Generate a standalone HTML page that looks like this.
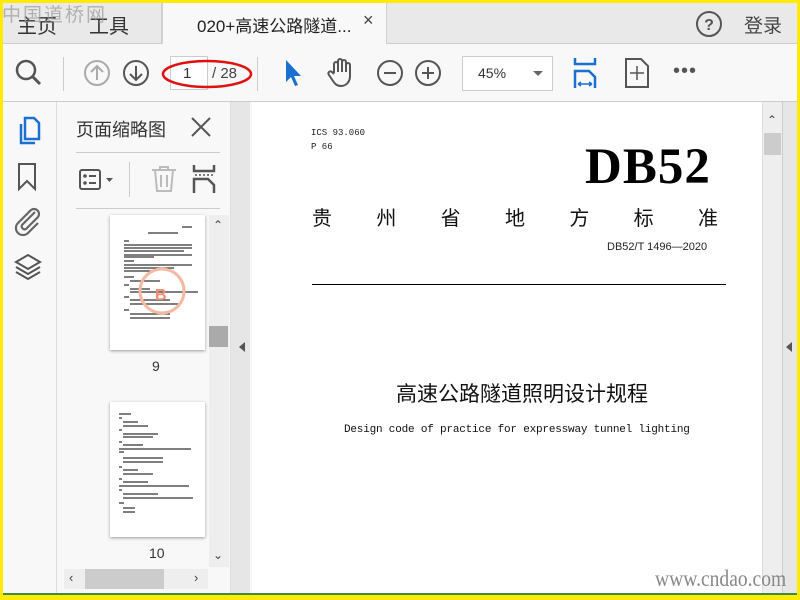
<!DOCTYPE html><html><head><meta charset="utf-8"><style>
*{margin:0;padding:0;box-sizing:border-box}
body{width:800px;height:600px;overflow:hidden;background:#ffeb00;position:relative;font-family:"Liberation Sans","Noto Sans CJK SC",sans-serif}
.a{position:absolute}
</style></head><body>
<div class="a" style="left:3px;top:3px;width:794px;height:591px;background:#f8f8f8"></div>
<div class="a" style="left:3px;top:3px;width:794px;height:41px;background:#e9e9e9;border-bottom:1px solid #ccc"></div>
<div class="a" style="left:161px;top:3px;width:2px;height:41px;background:#d0d0d0"></div>
<div class="a" style="left:163px;top:3px;width:223px;height:42px;background:#f8f8f8"></div>
<div class="a" style="left:386px;top:3px;width:1px;height:41px;background:#d0d0d0"></div>
<div class="a" style="left:17px;top:10px;font-size:20px;color:#333">主页</div>
<div class="a" style="left:89px;top:10px;font-size:20px;color:#333">工具</div>
<div class="a" style="left:2px;top:0px;font-size:19px;color:#999;letter-spacing:2px;opacity:.7">中国道桥网</div>
<div class="a" style="left:197px;top:12px;font-size:17px;color:#222">020+高速公路隧道...</div>
<div class="a" style="left:363px;top:10px;font-size:18px;color:#444">×</div>
<svg class="a" style="left:695px;top:10px" width="28" height="28"><circle cx="14" cy="14" r="12" fill="none" stroke="#555" stroke-width="2"/><text x="14" y="20" font-size="16" text-anchor="middle" fill="#555" font-family="Liberation Sans" font-weight="bold">?</text></svg>
<div class="a" style="left:744px;top:11px;font-size:19px;color:#444">登录</div>
<div class="a" style="left:3px;top:101px;width:794px;height:1px;background:#ccc"></div>
<svg class="a" style="left:14px;top:58px" width="30" height="30"><circle cx="12" cy="12" r="9" fill="none" stroke="#555" stroke-width="2.5"/><line x1="18.5" y1="18.5" x2="26" y2="26" stroke="#555" stroke-width="3"/></svg>
<div class="a" style="left:63px;top:57px;width:1px;height:34px;background:#ccc"></div>
<svg class="a" style="left:83px;top:59px" width="28" height="28"><circle cx="14" cy="14" r="12" fill="none" stroke="#aaa" stroke-width="2"/><path d="M14 21V8M8 13l6-6 6 6" fill="none" stroke="#aaa" stroke-width="2"/></svg>
<svg class="a" style="left:122px;top:59px" width="28" height="28"><circle cx="14" cy="14" r="12" fill="none" stroke="#555" stroke-width="2"/><path d="M14 7v13M8 15l6 6 6-6" fill="none" stroke="#555" stroke-width="2"/></svg>
<div class="a" style="left:170px;top:56px;width:38px;height:34px;border:1px solid #ccc;background:#fff"></div>
<div class="a" style="left:183px;top:65px;font-size:15px;color:#333">1</div>
<div class="a" style="left:212px;top:65px;font-size:15px;color:#444">/ 28</div>
<svg class="a" style="left:160px;top:58px" width="100" height="36"><ellipse cx="47" cy="16" rx="44" ry="13" fill="none" stroke="#e01010" stroke-width="2.5"/></svg>
<div class="a" style="left:257px;top:57px;width:1px;height:34px;background:#ccc"></div>
<svg class="a" style="left:282px;top:58px" width="24" height="30"><path d="M4 2L4 24 9 19 13 28 16 27 12 18 19 18Z" fill="#1a6fcf"/></svg>
<svg class="a" style="left:326px;top:57px" width="30" height="32"><path d="M8 16V7a2 2 0 0 1 4 0v8V4a2 2 0 0 1 4 0v11V5a2 2 0 0 1 4 0v10V8a2 2 0 0 1 4 0v11c0 6-4 10-9 10-4 0-6-2-8-5l-4-6a2 2 0 0 1 3-3l2 2" fill="none" stroke="#555" stroke-width="2"/></svg>
<svg class="a" style="left:376px;top:59px" width="28" height="28"><circle cx="14" cy="14" r="12" fill="none" stroke="#555" stroke-width="2"/><path d="M8 14h12" stroke="#555" stroke-width="2"/></svg>
<svg class="a" style="left:414px;top:59px" width="28" height="28"><circle cx="14" cy="14" r="12" fill="none" stroke="#555" stroke-width="2"/><path d="M8 14h12M14 8v12" stroke="#555" stroke-width="2"/></svg>
<div class="a" style="left:462px;top:56px;width:91px;height:35px;border:1px solid #ccc;background:#fff"></div>
<div class="a" style="left:478px;top:65px;font-size:14px;color:#333">45%</div>
<div class="a" style="left:533px;top:71px;border:5px solid transparent;border-top:5px solid #666"></div>
<svg class="a" style="left:573px;top:57px" width="26" height="32"><path d="M2 1v6h20V1M2 31V14h14l6 6v11" fill="none" stroke="#1a6fcf" stroke-width="2.5"/><path d="M5 27h14M5 27l3-2M5 27l3 2M19 27l-3-2M19 27l-3 2" stroke="#1a6fcf" stroke-width="1.5"/></svg>
<svg class="a" style="left:624px;top:57px" width="26" height="32"><path d="M2 2h15l7 7v21H2Z" fill="none" stroke="#555" stroke-width="2"/><path d="M13 9v14M6 16h14" stroke="#555" stroke-width="1.5"/></svg>
<div class="a" style="left:673px;top:60px;font-size:20px;color:#555;letter-spacing:1px">•••</div>
<div class="a" style="left:56px;top:102px;width:1px;height:492px;background:#ddd"></div>
<svg class="a" style="left:15px;top:115px" width="28" height="32"><path d="M10 3h9l5 5v16H10Z" fill="none" stroke="#1a6fcf" stroke-width="2.5"/><path d="M6 9v19h14" fill="none" stroke="#1a6fcf" stroke-width="2.5"/></svg>
<svg class="a" style="left:16px;top:162px" width="24" height="30"><path d="M3 2h16v25l-8-8-8 8Z" fill="none" stroke="#555" stroke-width="2"/></svg>
<svg class="a" style="left:13px;top:206px" width="30" height="30"><path d="M22 6L9 19a3 3 0 0 0 4 4L25 11a5 5 0 0 0-7-7L5 17a7 7 0 0 0 10 10l10-10" fill="none" stroke="#666" stroke-width="2.2"/></svg>
<svg class="a" style="left:13px;top:252px" width="30" height="30"><path d="M15 3L27 10 15 17 3 10Z M3 15l12 7 12-7M3 20l12 7 12-7" fill="none" stroke="#555" stroke-width="2"/></svg>
<div class="a" style="left:76px;top:116px;font-size:18px;color:#333">页面缩略图</div>
<svg class="a" style="left:190px;top:116px" width="22" height="22"><path d="M2 2l18 18M20 2L2 20" stroke="#555" stroke-width="2"/></svg>
<div class="a" style="left:76px;top:152px;width:144px;height:1px;background:#ccc"></div>
<div class="a" style="left:76px;top:208px;width:144px;height:1px;background:#ccc"></div>
<svg class="a" style="left:78px;top:167px" width="40" height="26"><rect x="2" y="3" width="20" height="19" rx="2" fill="none" stroke="#555" stroke-width="2"/><circle cx="7" cy="9" r="1.8" fill="#555"/><circle cx="7" cy="16" r="1.8" fill="#555"/><path d="M11 9h7M11 16h7" stroke="#555" stroke-width="2"/><path d="M28 11h7l-3.5 4Z" fill="#555"/></svg>
<div class="a" style="left:129px;top:162px;width:1px;height:35px;background:#ccc"></div>
<svg class="a" style="left:150px;top:165px" width="28" height="28"><path d="M2 5h24M10 5V2h8v3M5 5l2 21h14l2-21M11 10v12M17 10v12" fill="none" stroke="#bbb" stroke-width="2"/></svg>
<svg class="a" style="left:192px;top:164px" width="26" height="30"><path d="M2 1v6h20V1M2 29V15h14l6 6v8" fill="none" stroke="#555" stroke-width="2.5"/><path d="M3 11h18" stroke="#555" stroke-width="1.5" stroke-dasharray="2 2"/></svg>
<div class="a" style="left:110px;top:215px;width:95px;height:135px;background:#fff;box-shadow:0 1px 3px #999"></div>
<svg class="a" style="left:110px;top:215px" width="95" height="135"><g stroke="#333" stroke-width="1.2"><path d="M72 12h10M38 18h30M14 26h5M14 30h68M14 33h68M14 36h60M14 40h68M14 42h30M14 46h10M14 50h68M14 53h50M14 56h30M14 62h10M20 66h30M14 70h5M20 74h20M20 77h68M14 82h5M20 85h40M20 89h50M14 95h5M20 99h40M20 103h40"/></g><circle cx="52" cy="76" r="22" fill="none" stroke="#f4b9a0" stroke-width="3"/><text x="45" y="85" font-size="16" fill="#f08a70" font-weight="bold">B</text></svg>
<div class="a" style="left:152px;top:358px;font-size:14px;color:#333">9</div>
<div class="a" style="left:110px;top:402px;width:95px;height:135px;background:#fff;box-shadow:0 1px 3px #999"></div>
<svg class="a" style="left:110px;top:402px" width="95" height="135"><g stroke="#333" stroke-width="1.2"><path d="M9 12h12M9 16h3M13 20h15M13 24h25M9 28h3M13 32h35M13 35h30M9 40h3M13 43h20M9 47h72M9 50h5M13 56h40M13 60h40M9 65h3M13 68h15M13 72h30M9 77h3M13 80h25M9 84h70M9 88h3M13 92h35M13 96h70M9 101h5M13 106h12M13 110h12"/></g></svg>
<div class="a" style="left:149px;top:545px;font-size:14px;color:#333">10</div>
<div class="a" style="left:209px;top:215px;width:20px;height:352px;background:#eee"></div>
<div class="a" style="left:213px;top:218px;font-size:12px;color:#444">⌃</div>
<div class="a" style="left:209px;top:326px;width:19px;height:21px;background:#aaa"></div>
<div class="a" style="left:213px;top:548px;font-size:12px;color:#444">⌄</div>
<div class="a" style="left:64px;top:569px;width:144px;height:20px;background:#eee"></div>
<div class="a" style="left:85px;top:569px;width:79px;height:20px;background:#ccc"></div>
<div class="a" style="left:69px;top:570px;font-size:13px;color:#444">‹</div>
<div class="a" style="left:194px;top:570px;font-size:13px;color:#444">›</div>
<div class="a" style="left:230px;top:102px;width:20px;height:492px;background:#e6e6e6;border-left:1px solid #ddd"></div>
<div class="a" style="left:239px;top:342px;border:5px solid transparent;border-right:6px solid #555;border-left:0"></div>
<div class="a" style="left:252px;top:102px;width:510px;height:492px;background:#fff"></div>
<div class="a" style="left:311px;top:128px;font-size:9px;color:#222;font-family:'Liberation Mono',monospace">ICS 93.060</div>
<div class="a" style="left:311px;top:142px;font-size:9px;color:#222;font-family:'Liberation Mono',monospace">P 66</div>
<div class="a" style="left:585px;top:138px;font-size:51px;font-weight:bold;color:#000;font-family:'Liberation Serif',serif;letter-spacing:1px">DB52</div>
<div class="a" style="left:312px;top:202px;width:406px;display:flex;justify-content:space-between;font-size:20px;color:#111;font-family:'Noto Sans CJK SC',sans-serif"><span>贵</span><span>州</span><span>省</span><span>地</span><span>方</span><span>标</span><span>准</span></div>
<div class="a" style="left:607px;top:241px;font-size:11px;color:#222">DB52/T 1496—2020</div>
<div class="a" style="left:312px;top:284px;width:414px;height:1px;background:#000"></div>
<div class="a" style="left:396px;top:378px;font-size:21px;color:#111">高速公路隧道照明设计规程</div>
<div class="a" style="left:344px;top:424px;font-size:11px;color:#111;font-family:'Liberation Mono',monospace;letter-spacing:-.2px">Design code of practice for expressway tunnel lighting</div>
<div class="a" style="left:762px;top:102px;width:20px;height:492px;background:#eee;border-left:1px solid #ddd"></div>
<div class="a" style="left:767px;top:113px;font-size:12px;color:#444">⌃</div>
<div class="a" style="left:764px;top:133px;width:17px;height:22px;background:#ccc"></div>
<div class="a" style="left:782px;top:102px;width:15px;height:492px;background:#e6e6e6;border-left:1px solid #ccc"></div>
<div class="a" style="left:786px;top:342px;border:5px solid transparent;border-right:6px solid #555;border-left:0"></div>
<div class="a" style="left:655px;top:566px;font-size:23px;color:#888;font-family:'Liberation Serif',serif;transform:scaleX(.85);transform-origin:left">www.cndao.com</div>
<div class="a" style="left:3px;top:593px;width:794px;height:2px;background:#3a8a4a"></div>
</body></html>
